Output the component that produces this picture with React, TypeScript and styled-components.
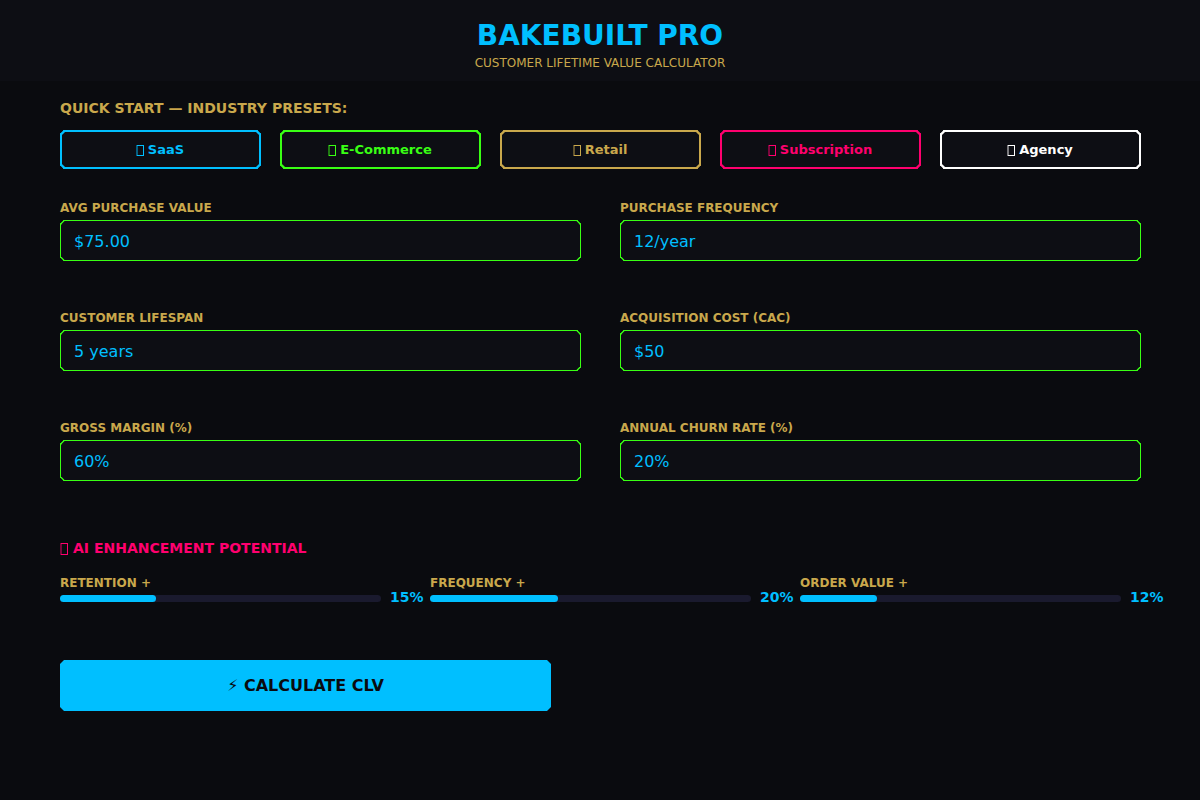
import React, { useId, useState } from 'react';
import styled, { createGlobalStyle } from 'styled-components';

const color = {
  page: '#0a0b0f',
  panel: '#0d0e14',
  blue: '#00bfff',
  green: '#39ff14',
  gold: '#c9a84c',
  pink: '#ff006e',
  white: '#ffffff',
  track: '#1a1a2e',
};

const GlobalStyle = createGlobalStyle`
  *, *::before, *::after { box-sizing: border-box; }
  body {
    margin: 0;
    min-height: 100vh;
    background: ${color.page};
    font-family: "DejaVu Sans", Verdana, sans-serif;
  }
  button, input { font: inherit; }
`;

const Header = styled.header`
  display: flex;
  flex-direction: column;
  align-items: center;
  padding: 20px 20px 11px;
  background: ${color.panel};
`;

const Title = styled.h1`
  margin: 0 0 4px;
  color: ${color.blue};
  font-size: 28px;
  line-height: 32px;
`;

const Subtitle = styled.p`
  margin: 0;
  color: ${color.gold};
  font-size: 12px;
  line-height: 14px;
`;

const Main = styled.main`
  padding: 19px 59px 40px 60px;
`;

const SectionTitle = styled.h2<{ $tone: string }>`
  display: flex;
  align-items: center;
  gap: 5px;
  margin: 0;
  color: ${(p) => p.$tone};
  font-size: 14px;
  line-height: 16px;
`;

const PresetRow = styled.div`
  display: grid;
  grid-template-columns: repeat(5, 1fr);
  gap: 19px;
  margin-top: 14px;
`;

const PresetButton = styled.button<{ $tone: string }>`
  display: flex;
  align-items: center;
  justify-content: center;
  gap: 4px;
  height: 39px;
  padding: 0 1px 0 0;
  border: 2px solid ${(p) => p.$tone};
  border-radius: 4px;
  corner-shape: bevel;
  background: ${color.panel};
  color: ${(p) => p.$tone};
  font-size: 13px;
  font-weight: bold;
  cursor: pointer;
`;

const FieldGrid = styled.div`
  display: grid;
  grid-template-columns: 1fr 1fr;
  gap: 50px 39px;
  margin-top: 32px;
`;

const Field = styled.div`
  display: flex;
  flex-direction: column;
  gap: 5px;
`;

const Label = styled.label`
  color: ${color.gold};
  font-size: 12px;
  font-weight: bold;
  line-height: 14px;
`;

const TextInput = styled.input`
  width: 100%;
  height: 41px;
  padding: 2px 13px 0;
  border: 1px solid ${color.green};
  border-radius: 4px;
  corner-shape: bevel;
  background: ${color.panel};
  color: ${color.blue};
  font-size: 16px;
  outline: none;
`;

const Enhancement = styled.section`
  margin: 59px -29px 0 0;
`;

const SliderRow = styled.div`
  display: grid;
  grid-template-columns: repeat(3, 1fr);
  margin-top: 20px;
`;

const SliderItem = styled.div`
  display: flex;
  flex-direction: column;
`;

const SliderLine = styled.div`
  display: flex;
  align-items: center;
  gap: 9px;
  height: 17px;
`;

const Track = styled.div`
  position: relative;
  flex: 1;
  height: 7px;
  border-radius: 4px;
  background: ${color.track};
`;

const Fill = styled.div`
  height: 100%;
  border-radius: 4px;
  background: ${color.blue};
`;

const Range = styled.input`
  position: absolute;
  inset: 0;
  width: 100%;
  height: 100%;
  margin: 0;
  opacity: 0;
  cursor: pointer;
`;

const Percent = styled.output`
  width: 40px;
  padding-bottom: 4px;
  color: ${color.blue};
  font-size: 14px;
  font-weight: bold;
  line-height: 16px;
`;

const CalculateButton = styled.button`
  display: block;
  width: 100%;
  max-width: 491px;
  height: 51px;
  margin-top: 53px;
  padding: 0;
  border: 0;
  border-radius: 4px;
  corner-shape: bevel;
  background: ${color.blue};
  color: ${color.page};
  font-size: 16px;
  font-weight: bold;
  cursor: pointer;
`;

const BoxSvg = styled.svg`
  flex: none;
  display: block;
  margin-top: 2px;
`;

function BoxIcon({ height }: { height: number }) {
  return (
    <BoxSvg
      width="8"
      height={height}
      viewBox={`0 0 8 ${height}`}
      fill="currentColor"
      aria-hidden="true"
    >
      <path opacity="0.45" d={`M0 0h2v${height}H0z`} />
      <path d={`M1 0h7v${height}H1v-1h6V1H1z`} />
    </BoxSvg>
  );
}

const presets = [
  { name: 'SaaS', tone: color.blue },
  { name: 'E-Commerce', tone: color.green },
  { name: 'Retail', tone: color.gold },
  { name: 'Subscription', tone: color.pink },
  { name: 'Agency', tone: color.white },
];

const fields = [
  { label: 'AVG PURCHASE VALUE', value: '$75.00' },
  { label: 'PURCHASE FREQUENCY', value: '12/year' },
  { label: 'CUSTOMER LIFESPAN', value: '5 years' },
  { label: 'ACQUISITION COST (CAC)', value: '$50' },
  { label: 'GROSS MARGIN (%)', value: '60%' },
  { label: 'ANNUAL CHURN RATE (%)', value: '20%' },
];

const boosts = [
  { label: 'RETENTION +', value: 15 },
  { label: 'FREQUENCY +', value: 20 },
  { label: 'ORDER VALUE +', value: 12 },
];

const MAX_BOOST = 50;

function TextField({ label, value }: { label: string; value: string }) {
  const id = useId();
  return (
    <Field>
      <Label htmlFor={id}>{label}</Label>
      <TextInput id={id} type="text" defaultValue={value} />
    </Field>
  );
}

function BoostSlider({ label, value }: { label: string; value: number }) {
  const id = useId();
  const [amount, setAmount] = useState(value);
  return (
    <SliderItem>
      <Label htmlFor={id}>{label}</Label>
      <SliderLine>
        <Track>
          <Fill style={{ width: `${(amount / MAX_BOOST) * 100}%` }} />
          <Range
            id={id}
            type="range"
            min={0}
            max={MAX_BOOST}
            value={amount}
            onChange={(e) => setAmount(Number(e.target.value))}
          />
        </Track>
        <Percent htmlFor={id}>{amount}%</Percent>
      </SliderLine>
    </SliderItem>
  );
}

export default function App() {
  return (
    <>
      <GlobalStyle />
      <Header>
        <Title>BAKEBUILT PRO</Title>
        <Subtitle>CUSTOMER LIFETIME VALUE CALCULATOR</Subtitle>
      </Header>
      <Main>
        <SectionTitle $tone={color.gold}>QUICK START — INDUSTRY PRESETS:</SectionTitle>
        <PresetRow>
          {presets.map((p) => (
            <PresetButton key={p.name} type="button" $tone={p.tone}>
              <BoxIcon height={11} />
              {p.name}
            </PresetButton>
          ))}
        </PresetRow>
        <FieldGrid>
          {fields.map((f) => (
            <TextField key={f.label} {...f} />
          ))}
        </FieldGrid>
        <Enhancement>
          <SectionTitle $tone={color.pink}>
            <BoxIcon height={12} />
            AI ENHANCEMENT POTENTIAL
          </SectionTitle>
          <SliderRow>
            {boosts.map((b) => (
              <BoostSlider key={b.label} {...b} />
            ))}
          </SliderRow>
        </Enhancement>
        <CalculateButton type="button">⚡ CALCULATE CLV</CalculateButton>
      </Main>
    </>
  );
}
